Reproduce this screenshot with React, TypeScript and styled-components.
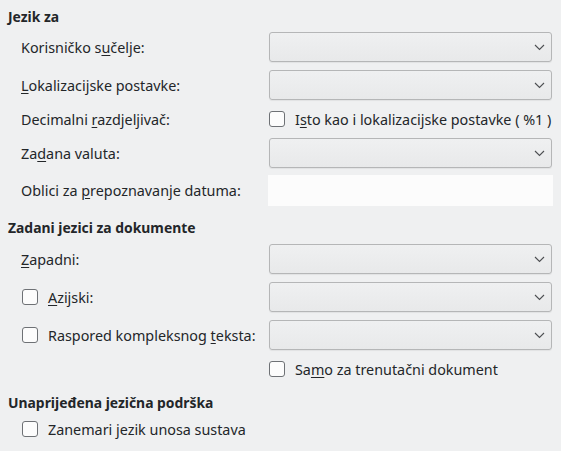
import styled, { createGlobalStyle } from 'styled-components';

const GlobalStyle = createGlobalStyle`
	html, body {
		margin: 0;
		padding: 0;
		background: #eff0f1;
	}
	body {
		font-family: 'Noto Sans', 'DejaVu Sans', sans-serif;
		font-size: 14.35px;
		color: #232629;
	}
`;

const Page = styled.div`
	width: 561px;
	height: 451px;
	box-sizing: border-box;
	padding: 6px 8px 0 8px;
	overflow: hidden;
`;

const Heading = styled.div<{ $top?: number }>`
	font-weight: 700;
	font-size: 13.9px;
	height: 22px;
	line-height: 22px;
	margin-top: ${({ $top }) => $top ?? 0}px;
`;

const Grid = styled.div`
	display: grid;
	grid-template-columns: 1fr 285px;
	align-items: center;
	padding-left: 13px;
`;

const Label = styled.div<{ $h?: number; $mt?: number }>`
	height: ${({ $h }) => $h ?? 30}px;
	margin-top: ${({ $mt }) => $mt ?? 0}px;
	display: flex;
	align-items: center;
	white-space: nowrap;
`;

const Cell = styled.div<{ $h?: number; $mt?: number }>`
	height: ${({ $h }) => $h ?? 30}px;
	margin-top: ${({ $mt }) => $mt ?? 0}px;
	display: flex;
	align-items: center;
`;

const Combo = styled.div`
	box-sizing: border-box;
	margin: 0 1px;
	width: 100%;
	height: 30px;
	border: 1px solid #b5b6b7;
	border-radius: 3px;
	background: linear-gradient(#eff0f1, #e8e9ea);
	box-shadow: 0 1px 1px rgba(0, 0, 0, 0.06);
	display: flex;
	align-items: center;
	justify-content: flex-end;
	padding-right: 6px;
	color: #4d4f52;
`;

const DateField = styled.div`
	width: 100%;
	height: 31px;
	background: #fcfcfc;
`;

const Box = styled.span`
	box-sizing: border-box;
	display: inline-block;
	width: 16px;
	height: 16px;
	border: 1px solid #6e7175;
	border-radius: 3px;
	background: #fcfcfc;
	flex: none;
	margin-left: 1px;
`;

const CheckWrap = styled.div`
	display: flex;
	align-items: center;
	gap: 10px;
	white-space: nowrap;
`;

const U = styled.u`
	text-underline-offset: 2px;
`;

const Chevron = () => (
	<svg width="11" height="7" viewBox="0 0 11 7">
		<path d="M1 1 L5.5 5.5 L10 1" fill="none" stroke="currentColor" strokeWidth="1.1" />
	</svg>
);

const Check = ({ children }: { children: React.ReactNode }) => (
	<CheckWrap>
		<Box />
		<span>{children}</span>
	</CheckWrap>
);

const Select = () => (
	<Combo>
		<Chevron />
	</Combo>
);

export default function App() {
	return (
		<Page>
			<GlobalStyle />
			<Heading>Jezik za</Heading>
			<Grid>
				<Label $mt={4}><span>Korisničko s<U>u</U>čelje:</span></Label>
				<Cell $mt={4}><Select /></Cell>

				<Label $mt={8}><span><U>L</U>okalizacijske postavke:</span></Label>
				<Cell $mt={8}><Select /></Cell>

				<Label $h={22} $mt={8}><span>Decimalni <U>r</U>azdjeljivač:</span></Label>
				<Cell $h={22} $mt={8}>
					<Check>I<U>s</U>to kao i lokalizacijske postavke ( %1 )</Check>
				</Cell>

				<Label $mt={8}><span>Za<U>d</U>ana valuta:</span></Label>
				<Cell $mt={8}><Select /></Cell>

				<Label $h={31} $mt={7}><span>Oblici za <U>p</U>repoznavanje datuma:</span></Label>
				<Cell $h={31} $mt={7}><DateField /></Cell>
			</Grid>

			<Heading $top={11}>Zadani jezici za dokumente</Heading>
			<Grid>
				<Label $mt={5}><span><U>Z</U>apadni:</span></Label>
				<Cell $mt={5}><Select /></Cell>

				<Label $mt={8}><Check><U>A</U>zijski:</Check></Label>
				<Cell $mt={8}><Select /></Cell>

				<Label $mt={8}><Check>Raspored kompleksnog <U>t</U>eksta:</Check></Label>
				<Cell $mt={8}><Select /></Cell>

				<Label $h={22} $mt={8} />
				<Cell $h={22} $mt={8}>
					<Check>Sa<U>m</U>o za trenutačni dokument</Check>
				</Cell>
			</Grid>

			<Heading $top={12}>Unaprijeđena jezična podrška</Heading>
			<Grid>
				<Label $h={22} $mt={4}>
					<Check>Zanemari <U>j</U>ezik unosa sustava</Check>
				</Label>
				<Cell $h={22} $mt={4} />
			</Grid>
		</Page>
	);
}
